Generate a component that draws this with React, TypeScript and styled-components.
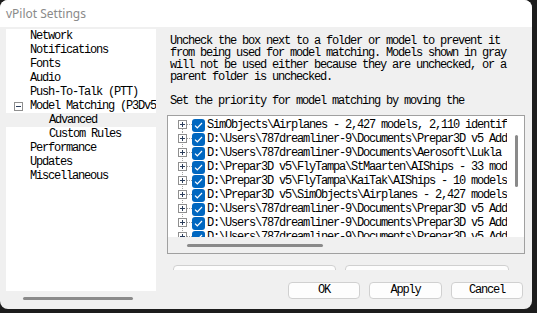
import { FC } from "react";
import styled, { createGlobalStyle } from "styled-components";

const mono = `"Liberation Mono", "Noto Sans CJK SC", monospace`;

const GlobalStyle = createGlobalStyle`
  html, body {
    margin: 0;
    padding: 0;
    background: #1d1d1d;
  }
  body {
    width: 537px;
    height: 313px;
    overflow: hidden;
  }
`;

const Window = styled.div`
  width: 532px;
  height: 309px;
  background: #f0f0f0;
  border-radius: 8px;
  overflow: hidden;
  display: flex;
  flex-direction: column;
  font-family: ${mono};
  font-size: 12px;
  letter-spacing: -1.2px;
  color: #000;
`;

const TitleBar = styled.div`
  height: 27px;
  flex-shrink: 0;
  background: #fff;
  padding-left: 6px;
  display: flex;
  align-items: center;
  font: 12px "Noto Sans", sans-serif;
  letter-spacing: 0;
  color: #8a8a8a;
`;

const Body = styled.div`
  flex: 1;
  display: flex;
  gap: 11px;
  padding: 2px 7px 0 6px;
`;

/* left navigation tree */
const LeftPane = styled.div`
  width: 150px;
  display: flex;
  flex-direction: column;
`;

const NavTree = styled.div`
  height: 262px;
  background: #fff;
  overflow: hidden;
`;

const NavItem = styled.div<{ $indent: number; $selected?: boolean }>`
  height: 14px;
  line-height: 14px;
  padding-left: ${(p) => p.$indent}px;
  background: ${(p) => (p.$selected ? "#f0f0f0" : "transparent")};
  white-space: nowrap;
  display: flex;
  align-items: center;
`;

const Collapse = styled.svg`
  width: 9px;
  height: 9px;
  margin-right: 7px;
  flex-shrink: 0;
`;

const ScrollStrip = styled.div<{ $h: number }>`
  height: ${(p) => p.$h}px;
  flex-shrink: 0;
  background: #f0f0f0;
`;

const HThumb = styled.div<{ $left: number; $top: number; $w: number }>`
  margin: ${(p) => p.$top}px 0 0 ${(p) => p.$left}px;
  width: ${(p) => p.$w}px;
  height: 3px;
  border-radius: 2px;
  background: #8a8a8a;
`;

/* right content */
const RightPane = styled.div`
  width: 358px;
  display: flex;
  flex-direction: column;
`;

const Description = styled.div`
  margin-top: 6px;
  padding-left: 3px;
  height: 72px;
  line-height: 12px;
  white-space: pre;
  overflow: hidden;
`;

const ModelList = styled.div`
  margin-top: 8px;
  height: 139px;
  box-sizing: border-box;
  border: 1px solid #a0a0a0;
  display: flex;
  flex-direction: column;
  background: #fff;
`;

const ListTop = styled.div`
  height: 121px;
  display: flex;
`;

const ListRows = styled.div`
  flex: 1;
  overflow: hidden;
  padding: 2px 0 0 10px;
`;

const ListRow = styled.div`
  height: 14px;
  display: flex;
  align-items: center;
  white-space: nowrap;
`;

const Connector = styled.svg`
  width: 14px;
  height: 14px;
  flex-shrink: 0;
`;

const Check = styled.span`
  width: 13px;
  height: 13px;
  flex-shrink: 0;
  border-radius: 3px;
  background: #0067c0;
  display: flex;
  align-items: center;
  justify-content: center;
`;

const RowText = styled.span`
  margin-left: 2px;
  line-height: 14px;
`;

const VScroll = styled.div`
  width: 17px;
  flex-shrink: 0;
  background: #fff;
`;

const VThumb = styled.div`
  margin: 19px 0 0 8px;
  width: 3px;
  height: 52px;
  border-radius: 2px;
  background: #8a8a8a;
`;

const ClipRow = styled.div`
  height: 16px;
  box-sizing: border-box;
  padding: 11px 0 0 6px;
  overflow: hidden;
  display: flex;
  gap: 9px;
  flex-shrink: 0;
`;

const ButtonRow = styled.div`
  margin-top: 12px;
  display: flex;
  justify-content: flex-end;
  gap: 9px;
  padding-right: 2px;
`;

const Button = styled.div<{ $w: number; $h?: number }>`
  width: ${(p) => p.$w}px;
  height: ${(p) => p.$h ?? 17}px;
  flex-shrink: 0;
  box-sizing: border-box;
  border: 1px solid #d0d0d0;
  border-radius: 4px;
  background: #fdfdfd;
  line-height: ${(p) => (p.$h ?? 17) - 2}px;
  text-align: center;
`;

const navItems = [
  { label: "Network", indent: 24 },
  { label: "Notifications", indent: 24 },
  { label: "Fonts", indent: 24 },
  { label: "Audio", indent: 24 },
  { label: "Push-To-Talk (PTT)", indent: 24 },
  { label: "Model Matching (P3Dv5)", indent: 8, expanded: true },
  { label: "Advanced", indent: 43, selected: true },
  { label: "Custom Rules", indent: 43 },
  { label: "Performance", indent: 24 },
  { label: "Updates", indent: 24 },
  { label: "Miscellaneous", indent: 24 },
];

const models = [
  "SimObjects\\Airplanes - 2,427 models, 2,110 identified",
  "D:\\Users\\787dreamliner-9\\Documents\\Prepar3D v5 Add-ons",
  "D:\\Users\\787dreamliner-9\\Documents\\Aerosoft\\Lukla - 4 models",
  "D:\\Prepar3D v5\\FlyTampa\\StMaarten\\AIShips - 33 models",
  "D:\\Prepar3D v5\\FlyTampa\\KaiTak\\AIShips - 10 models",
  "D:\\Prepar3D v5\\SimObjects\\Airplanes - 2,427 models",
  "D:\\Users\\787dreamliner-9\\Documents\\Prepar3D v5 Add-ons",
  "D:\\Users\\787dreamliner-9\\Documents\\Prepar3D v5 Add-ons",
  "D:\\Users\\787dreamliner-9\\Documents\\Prepar3D v5 Add-ons",
];

const description = `Uncheck the box next to a folder or model to prevent it
from being used for model matching. Models shown in gray
will not be used either because they are unchecked, or a
parent folder is unchecked.

Set the priority for model matching by moving the`;

const Expander: FC<{ first?: boolean }> = ({ first }) => (
  <Connector viewBox="0 0 14 14">
    <line x1="4.5" y1={first ? 7 : 0} x2="4.5" y2="14" stroke="#a0a0a0" strokeDasharray="1 1" />
    <line x1="9" y1="6.5" x2="14" y2="6.5" stroke="#a0a0a0" strokeDasharray="1 1" />
    <rect x="0.5" y="2.5" width="8" height="8" fill="#fff" stroke="#8f8f8f" />
    <line x1="2" y1="6.5" x2="7" y2="6.5" stroke="#2c3e5c" />
    <line x1="4.5" y1="4" x2="4.5" y2="9" stroke="#2c3e5c" />
  </Connector>
);

const CheckBox = () => (
  <Check>
    <svg width="9" height="9" viewBox="0 0 9 9">
      <polyline points="1,4.6 3.3,6.8 8,2" fill="none" stroke="#fff" strokeWidth="1.2" />
    </svg>
  </Check>
);

const App = () => {
  return (
    <>
      <GlobalStyle />
      <Window>
        <TitleBar>vPilot Settings</TitleBar>
        <Body>
          <LeftPane>
            <NavTree>
              {navItems.map((item) => (
                <NavItem key={item.label} $indent={item.indent} $selected={item.selected}>
                  {item.expanded && (
                    <Collapse viewBox="0 0 9 9">
                      <rect x="0.5" y="0.5" width="8" height="8" fill="#fff" stroke="#8f8f8f" />
                      <line x1="2" y1="4.5" x2="7" y2="4.5" stroke="#2c3e5c" />
                    </Collapse>
                  )}
                  {item.label}
                </NavItem>
              ))}
            </NavTree>
            <ScrollStrip $h={14}>
              <HThumb $left={17} $top={6} $w={110} />
            </ScrollStrip>
          </LeftPane>

          <RightPane>
            <Description>{description}</Description>
            <ModelList>
              <ListTop>
                <ListRows>
                  {models.map((m, i) => (
                    <ListRow key={i}>
                      <Expander first={i === 0} />
                      <CheckBox />
                      <RowText>{m}</RowText>
                    </ListRow>
                  ))}
                </ListRows>
                <VScroll>
                  <VThumb />
                </VScroll>
              </ListTop>
              <ScrollStrip $h={16}>
                <HThumb $left={19} $top={7} $w={136} />
              </ScrollStrip>
            </ModelList>
            <ClipRow>
              <Button $w={163} $h={23}>Move Up</Button>
              <Button $w={164} $h={23}>Move Down</Button>
            </ClipRow>
            <ButtonRow>
              <Button $w={72}>OK</Button>
              <Button $w={73}>Apply</Button>
              <Button $w={72}>Cancel</Button>
            </ButtonRow>
          </RightPane>
        </Body>
      </Window>
    </>
  );
};

export default App;
